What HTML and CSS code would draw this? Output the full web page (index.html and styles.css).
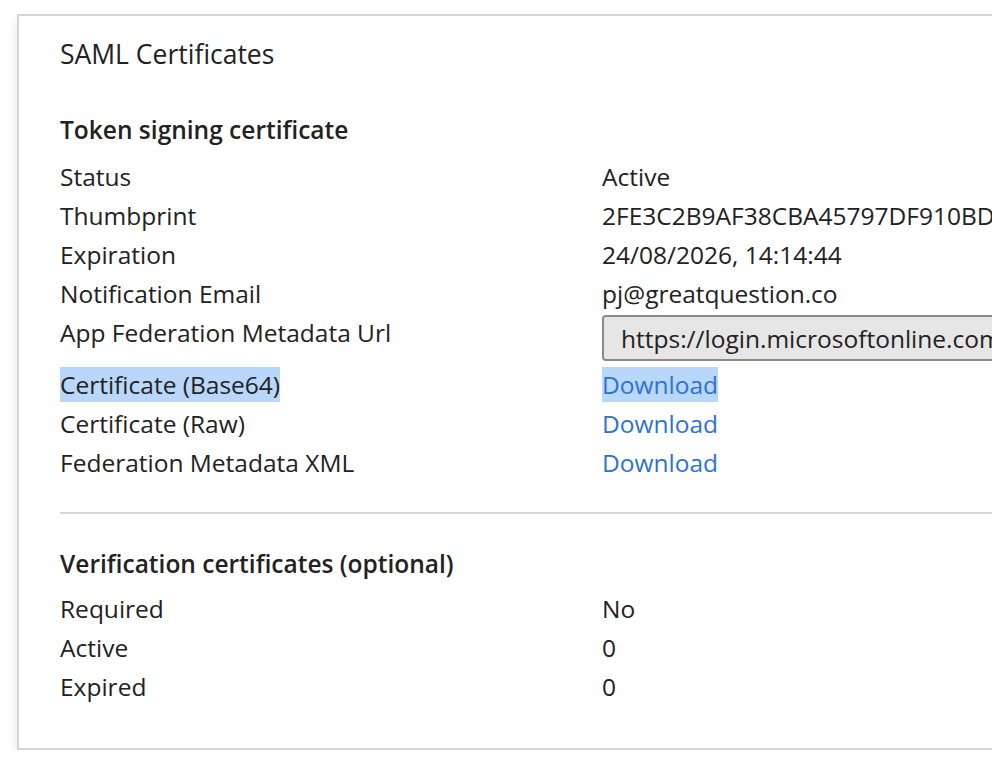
FILE: index.html
```html
<!DOCTYPE html>
<html lang="en">
<head>
  <meta charset="UTF-8">
  <meta name="viewport" content="width=device-width, initial-scale=1.0">
  <title>SAML Certificates</title>
  <link rel="stylesheet" href="styles.css">
</head>
<body>
  <div class="card">
    <h2 class="card-title">SAML Certificates</h2>

    <div class="section">
      <h3 class="section-title">Token signing certificate</h3>
      <div class="props">
        <div class="label">Status</div>
        <div class="value">Active</div>
        <div class="label">Thumbprint</div>
        <div class="value">2FE3C2B9AF38CBA45797DF910BD4C1E7A3B2F60D</div>
        <div class="label">Expiration</div>
        <div class="value">24/08/2026, 14:14:44</div>
        <div class="label">Notification Email</div>
        <div class="value">pj@greatquestion.co</div>
        <div class="label">App Federation Metadata Url</div>
        <div class="value">
          <input class="url-box" type="text" readonly value="https://login.microsoftonline.com/8f2c1a7e-4b3d-4e9a-9c2f-1d6b5e0a7c34/federationmetadata/2007-06/federationmetadata.xml">
        </div>
        <div class="label"><span class="selected">Certificate (Base64)</span></div>
        <div class="value"><a href="#" class="link selected">Download</a></div>
        <div class="label">Certificate (Raw)</div>
        <div class="value"><a href="#" class="link">Download</a></div>
        <div class="label">Federation Metadata XML</div>
        <div class="value"><a href="#" class="link">Download</a></div>
      </div>
    </div>

    <hr class="divider">

    <div class="section">
      <h3 class="section-title second">Verification certificates (optional)</h3>
      <div class="props">
        <div class="label">Required</div>
        <div class="value">No</div>
        <div class="label">Active</div>
        <div class="value">0</div>
        <div class="label">Expired</div>
        <div class="value">0</div>
      </div>
    </div>
  </div>
</body>
</html>
```

FILE: styles.css
```css
body {
  margin: 0;
  padding: 0;
  background-color: #fff;
  font-family: 'Open Sans', 'Noto Sans', sans-serif;
  color: #222;
  overflow: hidden;
}

.card {
  margin: 14px 0 0 17px;
  width: 1100px;
  border: 2px solid #d6d6d6;
  padding: 19px 0 42px 41px;
  box-shadow: 0 5px 10px rgba(0, 0, 0, 0.1);
}

.card-title {
  margin: 0;
  font-size: 26.5px;
  font-weight: 400;
  line-height: 38px;
}

.section-title {
  margin: 37px 0 8px;
  font-size: 24.5px;
  font-weight: 600;
  line-height: 39px;
}

.section-title.second {
  margin: 0 0 6px;
}

.props {
  display: grid;
  grid-template-columns: 542px 1fr;
  font-size: 24.5px;
  line-height: 39px;
}

.value {
  white-space: nowrap;
}

.url-box {
  box-sizing: border-box;
  width: 600px;
  height: 46px;
  margin: 2px 0 4px;
  padding: 0 17px;
  border: 2px solid #8a8a8a;
  border-radius: 4px;
  background-color: #e6e6e6;
  font-family: inherit;
  font-size: 24.5px;
  color: #222;
  outline: none;
}

.link {
  color: #2f72d4;
  text-decoration: none;
}

.selected {
  background-color: #b9d6fb;
  padding: 1px 0;
}

.divider {
  margin: 30px 0 30px;
  border: none;
  border-top: 2px solid #d6d6d6;
}
```
